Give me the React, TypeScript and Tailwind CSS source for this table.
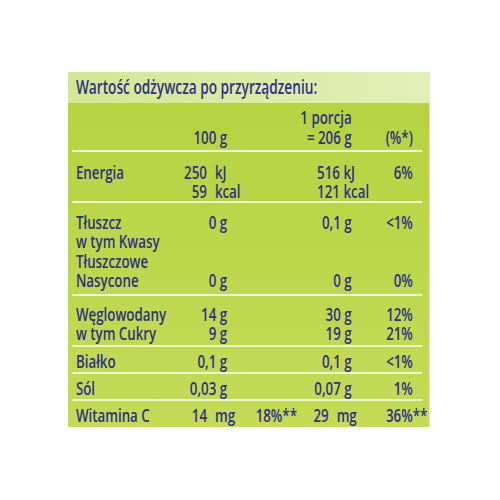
import type { ReactNode } from 'react'

// the label uses a tall, condensed face; we squeeze a humanist sans horizontally
const font = {
  fontFamily: '"Open Sans", "Noto Sans", "Liberation Sans", sans-serif',
}

function Line() {
  return <div className="h-[2px] ml-[6px] mr-[10px] bg-[#eef5cf]" />
}

// one table row: label, 100 g, %RWS (Wit. C), porcja, %
function Row({
  label,
  c1,
  c2,
  c3,
  c4,
  className = '',
}: {
  label: ReactNode
  c1?: ReactNode
  c2?: ReactNode
  c3?: ReactNode
  c4?: ReactNode
  className?: string
}) {
  return (
    <div className={`grid grid-cols-[139px_71px_97px_76px_85px] pl-[11px] ${className}`}>
      <div className="whitespace-nowrap">{label}</div>
      <div className="text-right whitespace-nowrap">{c1}</div>
      <div className="text-right whitespace-nowrap">{c2}</div>
      <div className="text-right whitespace-nowrap">{c3}</div>
      <div className="text-right whitespace-nowrap">{c4}</div>
    </div>
  )
}

export default function App() {
  return (
    <div className="w-[500px] h-[500px] bg-white pt-[72px] pl-[68px]" style={font}>
      <div className="w-[361px] h-[355px]">
        <div className="w-[502px] h-[355px] origin-top-left scale-x-[0.72] bg-gradient-to-b from-[#b3d33d] to-[#c4da58] text-[#2f3283] text-[18.5px] leading-[19px] font-semibold overflow-hidden">
          {/* Header */}
          <div className="h-[31px] bg-gradient-to-r from-[#d3e693] to-[#e2efb7] pl-[11px] pt-[5px] text-[19px] leading-[20px]">
            Wartość odżywcza po przyrządzeniu:
          </div>

          <Row
            className="h-[47px] pt-[4px] leading-[20px]"
            label=""
            c1={<div className="pt-[20px]">100 g</div>}
            c3={
              <div>
                <div>1 porcja</div>
                <div>= 206 g</div>
              </div>
            }
            c4={<div className="pt-[20px]">(%*)</div>}
          />
          <Line />

          <Row
            className="h-[49px] pt-[10px]"
            label="Energia"
            c1={
              <div className="flex flex-col items-start">
                <div className="flex">
                  <span className="w-[43px] text-right">250</span>
                  <span className="ml-[11px]">kJ</span>
                </div>
                <div className="flex">
                  <span className="w-[43px] text-right">59</span>
                  <span className="ml-[11px]">kcal</span>
                </div>
              </div>
            }
            c3={
              <div className="pl-[28px] text-left">
                <div>516 kJ</div>
                <div>121 kcal</div>
              </div>
            }
            c4="6%"
          />
          <Line />

          <div className="h-[91px] pt-[9px] leading-[19.3px]">
            <Row label="Tłuszcz" c1="0 g" c3="0,1 g" c4="<1%" />
            <Row label="w tym Kwasy" />
            <Row label="Tłuszczowe" />
            <Row label="Nasycone" c1="0 g" c3="0 g" c4="0%" />
          </div>
          <Line />

          <div className="h-[49px] pt-[8px]">
            <Row label="Węglowodany" c1="14 g" c3="30 g" c4="12%" />
            <Row label="w tym Cukry" c1="9 g" c3="19 g" c4="21%" />
          </div>
          <Line />

          <Row className="h-[25px] pt-[4px]" label="Białko" c1="0,1 g" c3="0,1 g" c4="<1%" />
          <Line />

          <Row className="h-[25px] pt-[4px]" label="Sól" c1="0,03 g" c3="0,07 g" c4="1%" />
          <Line />

          <Row
            className="h-[26px] pt-[4px]"
            label="Witamina C"
            c1={
              <span className="-mr-[11px]">
                14<span className="ml-[11px]">mg</span>
              </span>
            }
            c2="18%**"
            c3={
              <span className="-mr-[7px]">
                29<span className="ml-[11px]">mg</span>
              </span>
            }
            c4={<span className="-mr-[20px]">36%**</span>}
          />
        </div>
      </div>
    </div>
  )
}
